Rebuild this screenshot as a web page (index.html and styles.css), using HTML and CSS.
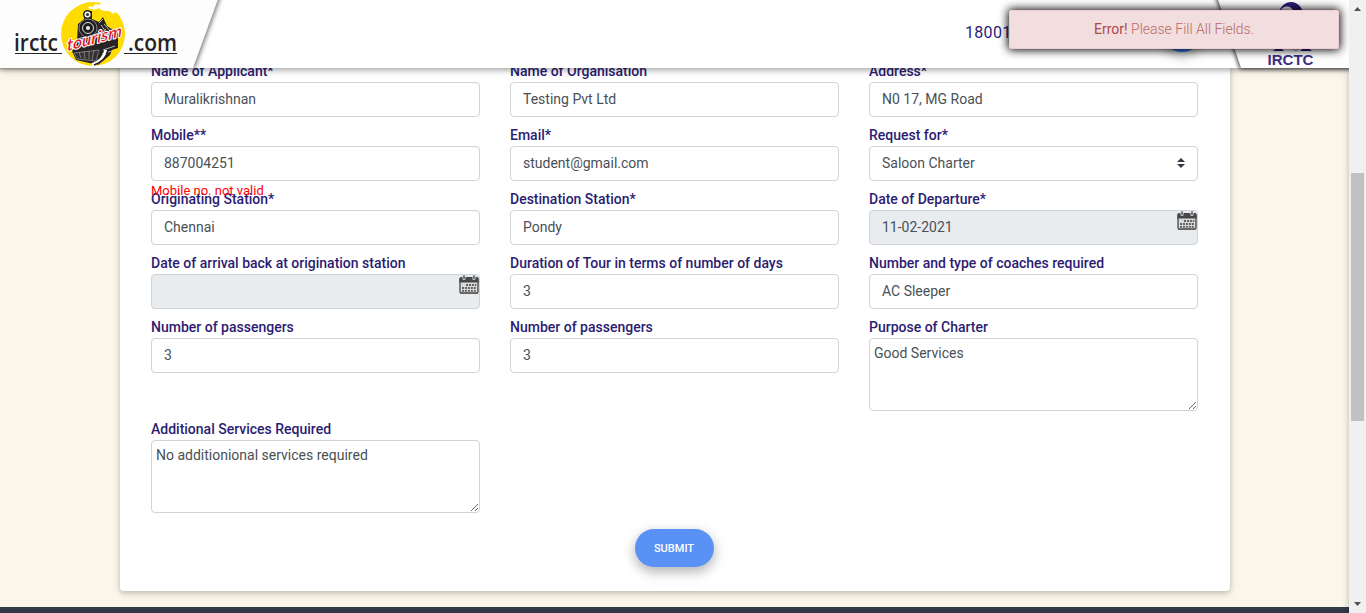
FILE: index.html
```html
<!DOCTYPE html>
<html lang="en">
<head>
<meta charset="utf-8">
<title>IRCTC Tourism - Charter Request</title>
<link rel="stylesheet" href="styles.css">
</head>
<body>
<svg class="sprite" width="0" height="0" aria-hidden="true">
  <symbol id="calendar" viewBox="0 0 20 20">
    <rect x="1" y="3" width="18" height="15" rx="1.6" fill="#d9dadb" stroke="#626262" stroke-width="1.6"/>
    <path d="M.4 7.500V4Q.4 2 2.400 2H17.600Q19.600 2 19.600 4V7.500Z" fill="#484848"/>
    <path d="M5 1V3.500M15 1V3.500" stroke="#d5d8da" stroke-width="3.200" stroke-linecap="round"/>
    <path d="M5 1V3.500M15 1V3.500" stroke="#555" stroke-width="1.500" stroke-linecap="round"/>
    <path d="M7 10H17.300M3 13H17.300M3 15.800H17.300" stroke="#626262" stroke-width="1.800" stroke-dasharray="2 .95"/>
    <path d="M1 18.200H19" stroke="#626262" stroke-width="1.500"/>
  </symbol>
</svg>
<div class="page">
  <header class="header">
    <svg class="logo" width="230" height="80" viewBox="0 0 230 80">
      <path class="tab" d="M-20 -20H225L193 68H-20Z"/>
      <g class="wordmark">
        <text x="14" y="51" textLength="44" lengthAdjust="spacingAndGlyphs">irctc</text>
        <text x="128" y="51" textLength="49" lengthAdjust="spacingAndGlyphs">.com</text>
      </g>
      <path d="M15 53.500H62M124 53.500H177" stroke="#262324" stroke-width="1.200"/>
      <circle cx="93" cy="34" r="32" fill="#ffdc00"/>
      <path d="M88 8Q89 5 93 7Q95 2 99 5Q103 0 108 5L116 9Q120 11 119 13Q115 11 113 14Q109 10 106 11Q101 11 99 8Q94 11 88 8Z" fill="#fff"/>
      <path d="M84 11H92V19L99 22L103 17L107 26L118 33V48L112 50L110 55L98 65L76 60L72 51L77 41L78 24L84 19Z" fill="#282324"/>
      <circle cx="87.500" cy="14.500" r="3.800" fill="#fff" stroke="#222" stroke-width="1.500"/>
      <circle cx="87.500" cy="14.500" r="1.600" fill="#333"/>
      <circle cx="88" cy="28" r="9" fill="#211e1f" stroke="#999" stroke-width=".8"/>
      <circle cx="88" cy="28" r="5.500" fill="none" stroke="#ddd" stroke-width="1"/>
      <circle cx="88" cy="28" r="2" fill="#eee"/>
      <path d="M99 23L103 19M101 25L108 35M104 24L112 33M97 37L106 29M103 50L115 46M102 54L112 51M80 38L96 36" stroke="#c6c6c6" stroke-width=".9" fill="none"/>
      <path d="M74 53L99 50L96 61L77 59ZM79 52L81 58M84 51L85 59M89 51V59M94 50L92 60" stroke="#8d8d8d" stroke-width=".8" fill="#353132"/>
      <path d="M106 50Q104 61 92 65" stroke="#fff" stroke-width="3.500" fill="none"/>
      <path d="M108 50Q106 61 94 65" stroke="#262324" stroke-width="1.600" fill="none"/>
      <text class="tourism" transform="translate(67 51) rotate(-15) skewX(-16)" textLength="57" lengthAdjust="spacingAndGlyphs">tourism</text>
    </svg>
    <span class="phone">1800110139</span>
    <span class="round-button"></span>
    <svg class="corner" width="149" height="80" viewBox="0 0 149 80">
      <path class="tab corner-tab" d="M16 -6L41 68H170V-6Z"/>
      <ellipse cx="91" cy="15" rx="12" ry="13" fill="#2b1c76"/>
      <ellipse cx="87" cy="15" rx="7.500" ry="8.500" fill="#fff"/>
      <path d="M73 51Q79 44 84 51ZM100 51Q106 44 112 51Z" fill="#2b1c76"/>
      <path d="M89 48H101L96 52Z" fill="#ccc"/>
      <text class="irctc" x="67.500" y="65" textLength="46" lengthAdjust="spacingAndGlyphs">IRCTC</text>
    </svg>
  </header>
  <div class="alert"><span><b>Error!</b> Please Fill All Fields.</span></div>

  <main class="content">
    <form class="card">
      <div class="fields">
        <div class="field"><label>Name of Applicant*</label><input value="Muralikrishnan"></div>
        <div class="field"><label>Name of Organisation</label><input value="Testing Pvt Ltd"></div>
        <div class="field"><label>Address*</label><input value="N0 17, MG Road"></div>
        <div class="field"><label>Mobile**</label><input value="887004251"><span class="invalid">Mobile no. not valid</span></div>
        <div class="field"><label>Email*</label><input value="student@gmail.com"></div>
        <div class="field"><label>Request for*</label>
          <div class="select"><span>Saloon Charter</span><svg width="8" height="10" viewBox="0 0 8 10"><path d="M0 4L4 0L8 4ZM0 6L4 10L8 6Z" fill="#343a40"/></svg></div></div>
        <div class="field"><label>Originating Station*</label><input value="Chennai"></div>
        <div class="field"><label>Destination Station*</label><input value="Pondy"></div>
        <div class="field"><label>Date of Departure*</label><input class="readonly" value="11-02-2021" readonly><svg class="cal"><use href="#calendar"/></svg></div>
        <div class="field"><label>Date of arrival back at origination station</label><input class="readonly" readonly><svg class="cal"><use href="#calendar"/></svg></div>
        <div class="field"><label>Duration of Tour in terms of number of days</label><input value="3"></div>
        <div class="field"><label>Number and type of coaches required</label><input value="AC Sleeper"></div>
        <div class="field"><label>Number of passengers</label><input value="3"></div>
        <div class="field"><label>Number of passengers</label><input value="3"></div>
        <div class="field"><label>Purpose of Charter</label><textarea>Good Services</textarea></div>
        <div class="field"><label>Additional Services Required</label><textarea>No additionional services required</textarea></div>
      </div>
      <button class="submit" type="button">SUBMIT</button>
    </form>
  </main>
  <footer class="footer"></footer>
</div>
<div class="scrollbar">
  <svg width="17" height="17"><path d="M5 11H12L8.500 7Z" fill="#505050"/></svg>
  <div class="thumb"></div>
  <svg class="down" width="17" height="17"><path d="M5 6H12L8.500 10Z" fill="#505050"/></svg>
</div>
</body>
</html>
```
FILE: styles.css
```css
* { box-sizing: border-box; }
body {
  margin: 0;
  height: 613px;
  display: flex;
  overflow: hidden;
  font-family: Roboto, "Liberation Sans", sans-serif;
  font-size: 14px;
}
.sprite { position: absolute; }
.page {
  position: relative;
  flex: 1;
  display: flex;
  flex-direction: column;
  overflow: hidden;
  background: #faf6ea;
}
.header {
  position: absolute;
  top: 0;
  left: 0;
  right: 0;
  z-index: 2;
  height: 68px;
  background: #fff;
  box-shadow: 0 2px 5px rgba(0, 0, 0, .26), 0 2px 10px rgba(0, 0, 0, .12);
}
.logo { position: absolute; left: 0; top: 0; }
.corner { position: absolute; right: 0; top: 0; }
.tab { fill: #fdfdfd; filter: drop-shadow(2px 0 2px rgba(0, 0, 0, .5)); }
.corner-tab { filter: drop-shadow(-1px 1px 2px rgba(0, 0, 0, .75)); }
.wordmark {
  font: 600 24px "Open Sans", "Noto Sans", sans-serif;
  fill: #262324;
}
.tourism {
  font: italic 500 16px Lato, sans-serif;
  fill: #dc1228;
  stroke: #fff;
  stroke-width: 2px;
  stroke-linejoin: round;
  paint-order: stroke;
}
.irctc {
  font: bold 14.500px "Liberation Sans", Arial, sans-serif;
  fill: #3c2f85;
}
.phone {
  position: absolute;
  left: 965px;
  top: 23px;
  font-size: 16px;
  line-height: 20px;
  letter-spacing: .3px;
  color: #2b1c7c;
}
.round-button {
  position: absolute;
  left: 1162px;
  top: 12px;
  width: 40px;
  height: 40px;
  border-radius: 50%;
  background: #3478e8;
  box-shadow: 0 5px 11px rgba(0, 0, 0, .25);
}
.alert {
  position: absolute;
  z-index: 3;
  left: 1009px;
  top: 10px;
  width: 330px;
  height: 39px;
  padding-bottom: 1px;
  display: flex;
  align-items: center;
  justify-content: center;
  border: 1px solid #ebccd1;
  border-radius: 2px;
  background: #f2dede;
  box-shadow: 0 0 10px 1px #000;
  color: #b86967;
  font-weight: 300;
}
.alert b { font-weight: 400; color: #ae4846; }
.content { height: 607px; padding: 0 119px 16px 120px; }
.card {
  height: 591px;
  padding: 61px 32px 24px 31px;
  display: flex;
  flex-direction: column;
  align-items: center;
  background: #fff;
  border-radius: 0 0 4px 4px;
  box-shadow: 0 2px 5px rgba(0, 0, 0, .16), 0 2px 10px rgba(0, 0, 0, .12);
}
.fields {
  display: grid;
  grid-template-columns: repeat(3, 329px);
  column-gap: 30px;
  row-gap: 8px;
  align-self: flex-start;
  align-items: start;
}
.field { position: relative; display: flex; flex-direction: column; }
label { height: 21px; line-height: 21px; font-weight: 500; color: #2b1c72; white-space: nowrap; }
input, textarea, .select {
  width: 100%;
  height: 35px;
  border: 1px solid #ced4da;
  border-radius: 4px;
  padding: 0 12px 1px;
  background: #fff;
  color: #495057;
  font: 400 14px Roboto, sans-serif;
}
textarea { display: block; height: 73px; padding: 4px; line-height: 21px; }
.select { display: flex; align-items: center; justify-content: space-between; }
.readonly { background: #e9ecef; }
.cal { position: absolute; right: 1px; top: 22px; width: 20px; height: 20px; }
.invalid {
  position: absolute;
  top: 57px;
  left: 0;
  z-index: 1;
  font-size: 13px;
  line-height: 17px;
  color: #f00;
}
.submit {
  width: 79px;
  height: 38px;
  margin: 16px 1px 0 0;
  padding: 0;
  border: 0;
  border-radius: 19px;
  background: #5991f5;
  box-shadow: 0 5px 11px rgba(0, 0, 0, .18), 0 4px 15px rgba(0, 0, 0, .15);
  color: #fff;
  font: 500 11px Roboto, sans-serif;
}
.footer { height: 6px; background: #2f3948; }
.scrollbar {
  width: 17px;
  display: flex;
  flex-direction: column;
  align-items: center;
  background: #f0f0f0;
  box-shadow: 0 2px 5px rgba(0, 0, 0, .16), 0 2px 10px rgba(0, 0, 0, .12);
  z-index: 1;
}
.thumb { width: 13px; height: 248px; margin-top: 156px; background: #c1c1c1; }
.down { margin-top: auto; }
```
